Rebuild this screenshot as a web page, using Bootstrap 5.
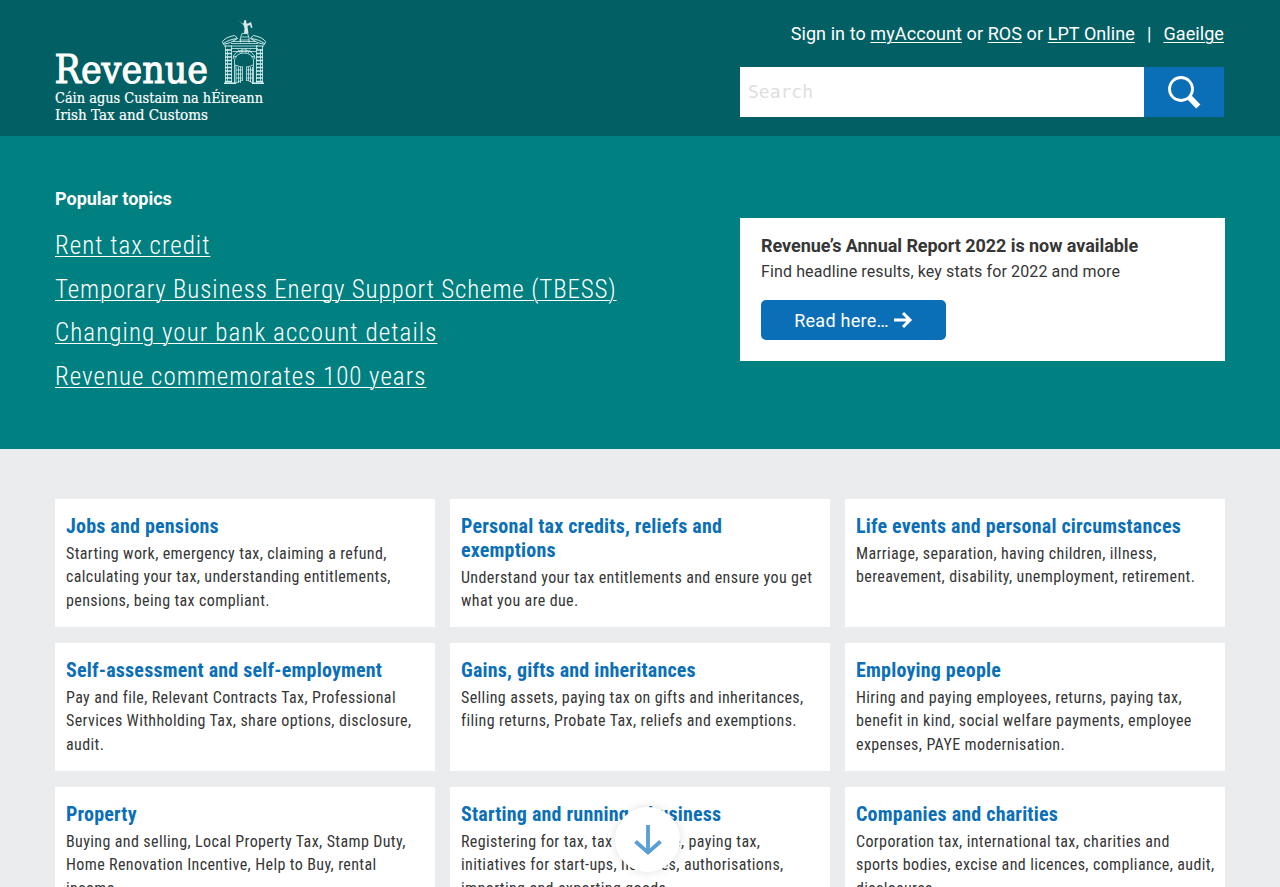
<!DOCTYPE html>
<html lang="en">
<head>
<meta charset="utf-8">
<meta name="viewport" content="width=device-width, initial-scale=1">
<title>Revenue - Irish Tax and Customs</title>
<link href="https://cdn.jsdelivr.net/npm/bootstrap@5.3.0/dist/css/bootstrap.min.css" rel="stylesheet">
<style>
  html, body { height: 100%; overflow: hidden; }
  body { font-family: Roboto, "Open Sans", sans-serif; font-size: 16px; color: #363636; background: #eaecee; }
  .site-width { width: 1170px; margin: 0 auto; }
  .site-header { background: #026064; height: 136px; }
  .brand-logo { margin-top: 18px; }
  .header-tools { width: 485px; padding-right: 1px; }
  .sign-in { font-size: 18px; letter-spacing: .08px; line-height: 27px; margin-top: 20px; color: #fff; }
  .sign-in a, .topics a { color: #fff; text-underline-offset: 2px; text-decoration-thickness: 1px; }
  .search-bar { height: 50px; margin-top: 20px; }
  .search-bar .form-control { border: 0; border-radius: 0; padding: 0 8px 2px; font: 18px "DejaVu Sans Mono", monospace; }
  .search-bar .form-control::placeholder { color: #dedede; opacity: 1; }
  .search-bar .btn { width: 80px; border: 0; border-radius: 0; padding: 0; }
  .btn-revenue, .btn-revenue:hover { background: #0b6fb8; color: #fff; }
  .hero { background: #008080; height: 313px; }
  .topics h2 { font-size: 18px; font-weight: 700; line-height: 24px; margin: 51px 0 0; color: #fff; }
  .topics ul { margin: 13px 0 0; }
  .topics li { font-size: 25px; font-weight: 300; font-stretch: 75%; letter-spacing: 1px; line-height: 43.7px; }
  .topics li:nth-child(2) { letter-spacing: .86px; }
  .topics li:nth-child(3) { letter-spacing: 1.08px; }
  .report-card { width: 485px; height: 143px; margin-top: 82px; padding: 15px 21px; background: #fff; }
  .report-card h2 { font-size: 18px; font-weight: 700; letter-spacing: -.05px; line-height: 25px; margin: 0; }
  .report-card p { font-size: 16px; letter-spacing: .12px; line-height: 27px; margin: 0 0 15px; }
  .report-card .btn { width: 185px; height: 40px; font-size: 18px; letter-spacing: .25px; border: 0; border-radius: 5px; padding: 0; }
  .guides { display: grid; grid-template-columns: repeat(3, 380px); grid-auto-rows: 128px; gap: 16px 15px; padding-top: 50px; }
  .guide { background: #fff; padding: 15px 11px; font-stretch: 75%; white-space: nowrap; }
  .guide h3 { font-size: 20px; font-weight: 700; letter-spacing: .2px; line-height: 24px; margin: 0 0 4px; color: #0b6fb8; }
  .guide p { letter-spacing: .38px; line-height: 23.4px; margin: 0; }
  .scroll-hint { position: fixed; left: 615px; top: 807px; width: 65px; height: 65px; border: 0; background: #fff; box-shadow: 0 0 10px rgba(0,0,0,.13); }
</style>
</head>
<body>
<header class="site-header">
  <div class="site-width d-flex justify-content-between">
    <a href="#" class="brand-logo d-block" aria-label="Revenue home">
      <svg class="d-block" width="212" height="108" viewBox="55 18 212 108" fill="#fff">
        <g font-family="DejaVu Serif, serif">
          <text x="54.500" y="82.500" font-size="38.500" stroke="#fff" stroke-width="1.100" textLength="153.500" lengthAdjust="spacingAndGlyphs">Revenue</text>
          <text x="55" y="102.700" font-size="14.500" stroke="#fff" stroke-width=".2" textLength="208" lengthAdjust="spacingAndGlyphs">Cáin agus Custaim na hÉireann</text>
          <text x="55" y="119.800" font-size="14.500" stroke="#fff" stroke-width=".2" textLength="153" lengthAdjust="spacingAndGlyphs">Irish Tax and Customs</text>
        </g>
        <!-- statue and pedestal -->
        <path d="M238.500 20l3.500 3.500h1.500l1-3.500h1.500l.5 3.500h1.500l3-1.500 1.500 5.500-1.500.5-1-3-2.500 1 .5 4 .5 3.500h-4.500l.5-5-1-3.500-2-1.500z" opacity=".85"/>
        <g fill="none" stroke="#d3eeee" stroke-width=".8">
          <path d="M240.500 42.500v-5l1.500-4h5.500l1.500 4v5M241 37h8M233 41.500h23M231 43.500h27M231 46h27M231 48.500h27M239 40h11"/>
          <!-- broken pediment -->
          <path stroke-width="1" d="M222.500 41.500c3-4 8-5 12-6M223.500 43.500c4-3 8-4 13-5M222.500 41.500l1 3 7-2 7-4-2.500-3M265.500 41.500c-3-4-8-5-12-6M264.500 43.500c-4-3-8-4-13-5M265.500 41.500l-1 3-7-2-7-4 2.500-3M224 46h8M256 46h8"/>
          <!-- rusticated piers -->
          <path d="M225.500 46v37M227.500 49v33M231.500 46v37M256.500 46v37M260.500 49v33M262.500 46v37"/>
          <path stroke-width="1.600" d="M225 50h7M225 53.500h7M225 57h7M225 60.500h7M225 64h7M225 67.500h7M225 71h7M225 74.500h7M225 78h7M225 81.500h7M256 50h7M256 53.500h7M256 57h7M256 60.500h7M256 64h7M256 67.500h7M256 71h7M256 74.500h7M256 78h7M256 81.500h7M224 83.300h12M252 83.300h12"/>
          <!-- arch and gates -->
          <path d="M234.500 83V60a9.500 7 0 0 1 19 0v23M233 59a11 9 0 0 1 22 0M232.500 51.500h23.500M238 49.500l2.500 4M242 49v4M246 49v4M250.500 49.500l-2.500 4M233 56l4 1M255 56l-4 1"/>
          <path d="M235 65q5 2 8 2M253 65q-4 2-7 2M236 70h6M236 74h6M236 78h6M247 70h6M247 74h6M247 78h6M236 65v18M238.500 67v16M240.500 67v16M242.500 67v14M246.500 67v14M248.500 67v14M250.500 67v15M252.500 67v16M236 83l6-3M253 83l-6-3"/>
        </g>
      </svg>
    </a>
    <div class="header-tools">
      <div class="sign-in d-flex justify-content-end text-nowrap">
        <span>Sign in to <a href="#">myAccount</a> or <a href="#">ROS</a> or <a href="#">LPT Online</a></span>
        <span class="px-2 mx-1">|</span>
        <a href="#">Gaeilge</a>
      </div>
      <form class="search-bar d-flex">
        <input class="form-control shadow-none" type="text" placeholder="Search" aria-label="Search">
        <button class="btn btn-revenue flex-shrink-0" type="button" aria-label="Search">
          <svg class="d-block mx-auto" width="34" height="34" viewBox="0 0 34 34" fill="none" stroke="#fff"><circle cx="14" cy="14" r="11.500" stroke-width="2.800"/><path d="M22.500 22.500l8.800 9" stroke-width="5.800"/></svg>
        </button>
      </form>
    </div>
  </div>
</header>
<section class="hero">
  <div class="site-width d-flex justify-content-between">
    <div class="topics">
      <h2>Popular topics</h2>
      <ul class="list-unstyled text-nowrap">
        <li><a href="#">Rent tax credit</a></li>
        <li><a href="#">Temporary Business Energy Support Scheme (TBESS)</a></li>
        <li><a href="#">Changing your bank account details</a></li>
        <li><a href="#">Revenue commemorates 100 years</a></li>
      </ul>
    </div>
    <aside class="report-card text-nowrap">
      <h2>Revenue’s Annual Report 2022 is now available</h2>
      <p>Find headline results, key stats for 2022 and more</p>
      <a href="#" class="btn btn-revenue d-flex align-items-center justify-content-center">Read here…
        <svg class="ms-1" width="20" height="18" viewBox="0 0 20 18" fill="none" stroke="#fff" stroke-width="3"><path d="M1 9h15M10 2l7 7-7 7"/></svg>
      </a>
    </aside>
  </div>
</section>
<main class="site-width guides">
  <article class="guide"><h3>Jobs and pensions</h3><p>Starting work, emergency tax, claiming a refund,<br>calculating your tax, understanding entitlements,<br>pensions, being tax compliant.</p></article>
  <article class="guide"><h3>Personal tax credits, reliefs and<br>exemptions</h3><p>Understand your tax entitlements and ensure you get<br>what you are due.</p></article>
  <article class="guide"><h3>Life events and personal circumstances</h3><p>Marriage, separation, having children, illness,<br>bereavement, disability, unemployment, retirement.</p></article>
  <article class="guide"><h3>Self-assessment and self-employment</h3><p>Pay and file, Relevant Contracts Tax, Professional<br>Services Withholding Tax, share options, disclosure,<br>audit.</p></article>
  <article class="guide"><h3>Gains, gifts and inheritances</h3><p>Selling assets, paying tax on gifts and inheritances,<br>filing returns, Probate Tax, reliefs and exemptions.</p></article>
  <article class="guide"><h3>Employing people</h3><p>Hiring and paying employees, returns, paying tax,<br>benefit in kind, social welfare payments, employee<br>expenses, PAYE modernisation.</p></article>
  <article class="guide"><h3>Property</h3><p>Buying and selling, Local Property Tax, Stamp Duty,<br>Home Renovation Incentive, Help to Buy, rental<br>income.</p></article>
  <article class="guide"><h3>Starting and running a business</h3><p>Registering for tax, tax clearance, paying tax,<br>initiatives for start-ups, licences, authorisations,<br>importing and exporting goods.</p></article>
  <article class="guide"><h3>Companies and charities</h3><p>Corporation tax, international tax, charities and<br>sports bodies, excise and licences, compliance, audit,<br>disclosures.</p></article>
</main>
<button class="scroll-hint rounded-circle p-0" type="button" aria-label="Scroll down">
  <svg class="d-block mx-auto" width="32" height="32" viewBox="0 0 32 32" fill="none" stroke="#5a9fd4" stroke-width="3.800"><path d="M16 1v27M3.500 17.500L16 28.500l12.500-11"/></svg>
</button>
<script src="https://cdn.jsdelivr.net/npm/bootstrap@5.3.0/dist/js/bootstrap.bundle.min.js"></script>
</body>
</html>
